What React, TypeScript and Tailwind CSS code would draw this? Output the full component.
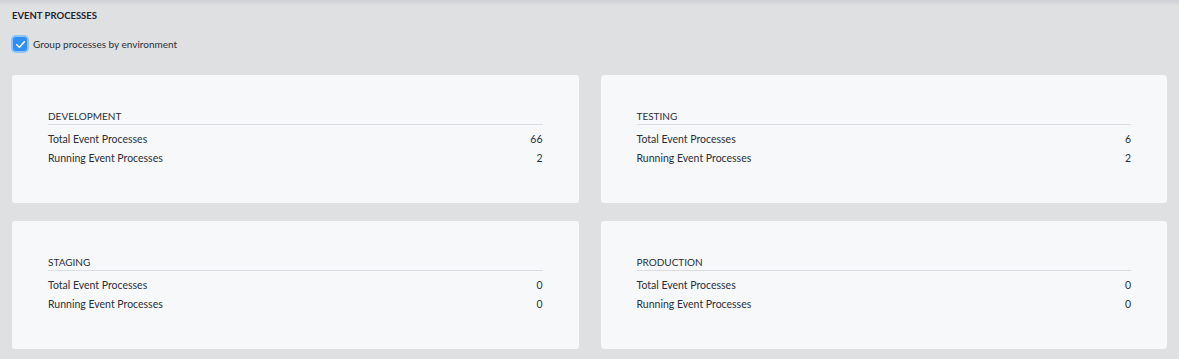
import React from 'react';

interface Env {
  name: string;
  total: number;
  running: number;
}

const envs: Env[] = [
  { name: 'DEVELOPMENT', total: 66, running: 2 },
  { name: 'TESTING', total: 6, running: 2 },
  { name: 'STAGING', total: 0, running: 0 },
  { name: 'PRODUCTION', total: 0, running: 0 },
];

const EnvCard = ({ env }: { env: Env }) => (
  <div className="h-[128px] bg-[#f7f8fa] rounded-[3px] flex flex-col justify-center px-[36px]">
    <div className="text-[10px] leading-[14px] text-[#2a2f3a] uppercase border-b border-[#dcdde0] pb-[1px] -mt-[1px]">
      {env.name}
    </div>
    <div className="flex justify-between items-center h-[19px] mt-[5px] text-[10.5px] text-[#2a2f3a]">
      <div>Total Event Processes</div>
      <div>{env.total}</div>
    </div>
    <div className="flex justify-between items-center h-[19px] text-[10.5px] text-[#2a2f3a]">
      <div>Running Event Processes</div>
      <div>{env.running}</div>
    </div>
  </div>
);

const App = () => {
  return (
    <div
      className="w-full h-[359px] bg-[#dfe0e2] relative px-[12px] pt-[9px]"
      style={{ fontFamily: 'Lato, "Noto Sans", sans-serif' }}
    >
      <div className="absolute top-0 left-0 right-0 h-[6px] bg-gradient-to-b from-[#cfd0d3] to-transparent"></div>
      <div className="text-[9.5px] leading-[14px] font-bold text-[#1f2430]">EVENT PROCESSES</div>
      <label className="flex items-center gap-[6px] mt-[13px] h-[16px]">
        <span className="w-[14px] h-[14px] ml-[1px] rounded-[3px] bg-[#2f8ff0] ring-2 ring-[#8cc4fa] flex items-center justify-center">
          <svg width="11" height="11" viewBox="0 0 10 10" fill="none">
            <path d="M1.5 5.2 L4 7.5 L8.5 2.5" stroke="white" strokeWidth="1.4" strokeLinecap="round" strokeLinejoin="round" />
          </svg>
        </span>
        <span className="text-[10px] text-[#2a2f3a]">Group processes by environment</span>
      </label>
      <div className="grid grid-cols-2 gap-x-[22px] gap-y-[18px] mt-[23px]">
        {envs.map(env => (
          <EnvCard key={env.name} env={env} />
        ))}
      </div>
    </div>
  );
};

export default App;
